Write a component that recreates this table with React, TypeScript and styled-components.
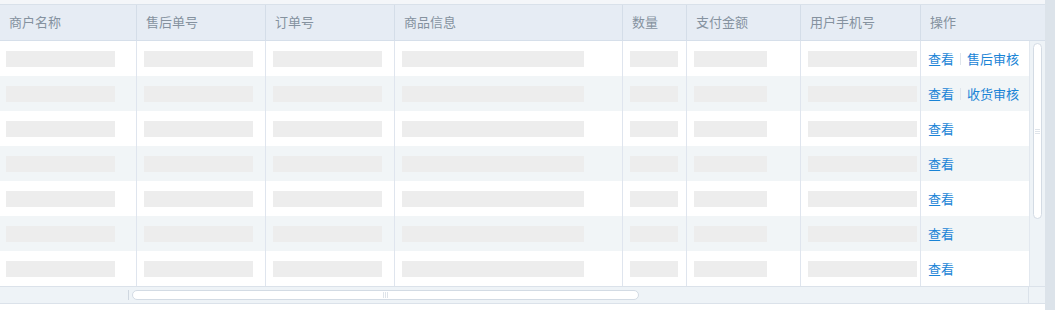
import React from 'react'
import styled, { createGlobalStyle } from 'styled-components'

const GlobalStyle = createGlobalStyle`
  html, body {
    margin: 0;
    padding: 0;
    background: #fff;
    font-family: "Noto Sans CJK SC", "Noto Sans", sans-serif;
  }
`

const COLS = [137, 129, 129, 228, 64, 114, 120, 108]
const BARS = [109, 109, 109, 182, 48, 73, 109, 0]
const HEADS = ['商户名称', '售后单号', '订单号', '商品信息', '数量', '支付金额', '用户手机号', '操作']
const ACTIONS = [['查看', '售后审核'], ['查看', '收货审核'], ['查看'], ['查看'], ['查看'], ['查看'], ['查看']]

const Frame = styled.div`
  display: flex;
  width: 1055px;
  height: 310px;
  overflow: hidden;
`

const Main = styled.div`
  width: 1045px;
  display: flex;
  flex-direction: column;
  background: #fff;
`

const Gutter = styled.div`
  width: 10px;
  background: #dce3ea;
`

const TopStrip = styled.div`
  height: 4px;
  background: #f4f6f9;
  border-bottom: 1px solid #d9e1ea;
`

const HeadRow = styled.div`
  display: flex;
  height: 35px;
  background: #e6ecf4;
  border-bottom: 1px solid #d6dfea;
`

const HeadCell = styled.div<{ $w: number }>`
  width: ${(p) => p.$w}px;
  box-sizing: border-box;
  padding-left: 9px;
  border-right: 1px solid #d4dde8;
  color: #85929f;
  font-size: 13px;
  line-height: 34px;
  &:last-child {
    border-right: none;
    flex: 1;
  }
`

const BodyArea = styled.div`
  display: flex;
  height: 245px;
`

const Rows = styled.div`
  width: 1029px;
  display: flex;
  flex-direction: column;
`

const Row = styled.div<{ $alt: boolean }>`
  display: flex;
  height: 35px;
  background: ${(p) => (p.$alt ? '#f1f5f7' : '#fff')};
`

const Cell = styled.div<{ $w: number }>`
  width: ${(p) => p.$w}px;
  box-sizing: border-box;
  padding-left: 7px;
  border-right: 1px solid #dfe5ee;
  display: flex;
  align-items: center;
  &:first-child {
    padding-left: 6px;
  }
  &:last-child {
    border-right: none;
    padding-left: 7px;
  }
`

const Bar = styled.div<{ $w: number }>`
  width: ${(p) => p.$w}px;
  height: 16px;
  background: #ededed;
`

const Link = styled.span`
  color: #1a84d6;
  font-size: 13px;
`

const Sep = styled.span`
  display: inline-block;
  width: 1px;
  height: 12px;
  background: #dfe5ec;
  margin: 0 6px;
`

const VTrack = styled.div`
  width: 16px;
  background: #eef3f7;
  border-left: 1px solid #e2e8ef;
  box-sizing: border-box;
  padding: 2px 0 0 3px;
`

const VThumb = styled.div`
  width: 9px;
  height: 176px;
  box-sizing: border-box;
  background: #fff;
  border: 1px solid #d3dbe4;
  border-radius: 5px;
  display: flex;
  align-items: center;
  justify-content: center;
`

const Grip = styled.div<{ $vertical?: boolean }>`
  display: flex;
  flex-direction: ${(p) => (p.$vertical ? 'row' : 'column')};
  gap: 1px;
  & > i {
    display: block;
    background: #dfe4ea;
    ${(p) => (p.$vertical ? 'width: 1px; height: 6px;' : 'width: 5px; height: 1px;')}
  }
`

const HBar = styled.div`
  height: 16px;
  display: flex;
  border-top: 1px solid #dbe2ea;
  border-bottom: 1px solid #dbe2ea;
  background: #eef3f7;
`

const HTrack = styled.div`
  width: 1029px;
  display: flex;
  align-items: center;
  padding-left: 128px;
  box-sizing: border-box;
  border-right: 1px solid #dbe2ea;
`

const HTick = styled.div`
  width: 1px;
  height: 10px;
  background: #cfd7e0;
  margin-right: 3px;
`

const HThumb = styled.div`
  width: 507px;
  height: 10px;
  box-sizing: border-box;
  background: #fff;
  border: 1px solid #d3dbe4;
  border-radius: 5px;
  display: flex;
  align-items: center;
  justify-content: center;
`

export default function App(): React.ReactElement {
  return (
    <>
      <GlobalStyle />
      <Frame>
        <Main>
          <TopStrip />
          <HeadRow>
            {HEADS.map((h, i) => (
              <HeadCell key={h} $w={COLS[i]}>{h}</HeadCell>
            ))}
          </HeadRow>
          <BodyArea>
            <Rows>
              {ACTIONS.map((acts, r) => (
                <Row key={r} $alt={r % 2 === 1}>
                  {COLS.map((w, c) =>
                    c < 7 ? (
                      <Cell key={c} $w={w}><Bar $w={BARS[c]} /></Cell>
                    ) : (
                      <Cell key={c} $w={w}>
                        {acts.map((a, k) => (
                          <React.Fragment key={a}>
                            {k > 0 && <Sep />}
                            <Link>{a}</Link>
                          </React.Fragment>
                        ))}
                      </Cell>
                    )
                  )}
                </Row>
              ))}
            </Rows>
            <VTrack>
              <VThumb>
                <Grip><i /><i /><i /></Grip>
              </VThumb>
            </VTrack>
          </BodyArea>
          <HBar>
            <HTrack>
              <HTick />
              <HThumb>
                <Grip $vertical><i /><i /><i /></Grip>
              </HThumb>
            </HTrack>
          </HBar>
        </Main>
        <Gutter />
      </Frame>
    </>
  )
}
